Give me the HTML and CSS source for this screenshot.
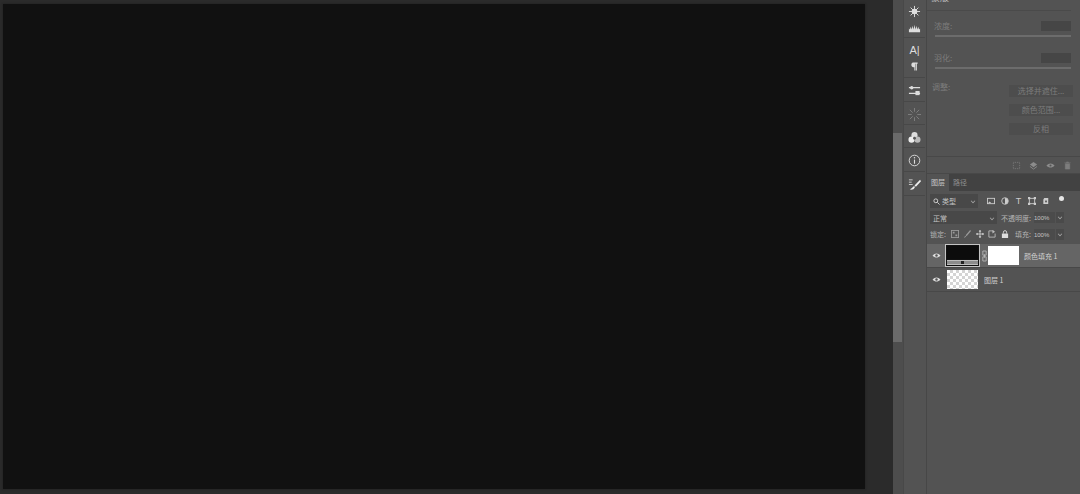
FILE: index.html
```html
<!DOCTYPE html>
<html lang="zh-CN">
<head>
    <meta charset="UTF-8">
    <title>图层面板</title>
    <link rel="stylesheet" href="styles.css">
</head>
<body>
<div class="app">
    <main class="workspace">
        <div class="canvas"></div>
    </main>

    <div class="scrollbar">
        <div class="scroll-thumb"></div>
    </div>

    <!-- collapsed panel icons -->
    <nav class="dock">
        <div class="dock-group group-a">
            <svg class="dock-icon" viewBox="0 0 14 14"><circle cx="7" cy="7" r="3" fill="#ddd"/><path d="M7 1v12M1 7h12M2.800 2.800l8.400 8.400M11.200 2.800l-8.400 8.400" stroke="#ddd" stroke-width="1"/></svg>
            <svg class="dock-icon" viewBox="0 0 14 14"><path d="M1 11V7l1 1 1-3 1 3 1-4 1 4 1-5 1 5 1-4 1 4 1-3 1 3 1-1v4z" fill="#ddd"/></svg>
        </div>
        <div class="dock-group group-b">
            <div class="dock-glyph">A|</div>
            <svg class="dock-icon icon-small" viewBox="0 0 14 14"><path d="M5 2h6v1.400h-1V12H8.600V3.400H8V12H6.800V8C4.500 8 3 6.800 3 5s.8-3 2-3z" fill="#ddd"/></svg>
        </div>
        <div class="dock-group group-c">
            <svg class="dock-icon" viewBox="0 0 14 14"><path d="M1 4h12M1 10h12" stroke="#ddd" stroke-width="1.400"/><circle cx="4" cy="4" r="1.800" fill="#ddd"/><rect x="8" y="7.500" width="4.500" height="4.500" fill="#ddd"/></svg>
        </div>
        <div class="dock-group group-d">
            <svg class="dock-icon" viewBox="0 0 14 14"><path d="M7 0v4M7 10v4M0 7h4M10 7h4M2 2l3 3M9 9l3 3M12 2L9 5M5 9l-3 3" stroke="#8c8c8c" stroke-width=".8"/></svg>
        </div>
        <div class="dock-group group-e">
            <svg class="dock-icon" viewBox="0 0 14 14"><circle cx="7" cy="4.500" r="3.300" fill="#ddd"/><circle cx="3.800" cy="9.300" r="3.300" fill="#eee"/><circle cx="10.200" cy="9.300" r="3.300" fill="#bbb"/><circle cx="7" cy="7.800" r="1.500" fill="#555"/></svg>
        </div>
        <div class="dock-group group-f">
            <svg class="dock-icon" viewBox="0 0 14 14"><circle cx="7" cy="7" r="5.700" fill="none" stroke="#ddd"/><path d="M7 6v4.500" stroke="#ddd" stroke-width="1.200"/><circle cx="7" cy="4" r=".8" fill="#ddd"/></svg>
        </div>
        <div class="dock-group group-g">
            <svg class="dock-icon" viewBox="0 0 14 14"><path d="M1 2h4M1 4.500h3M1 7h4" stroke="#ccc"/><path d="M13 2L7 8l1.500 1.500L14 3.500zM6.500 8.500L5 10c-.5.800-1.500 1-3 2.500 2.200.3 4.500 0 5.500-2.800z" fill="#eee"/></svg>
        </div>
    </nav>

    <aside class="panels">
        <section class="properties">
            <div class="prop-head"><span class="head-text">蒙版</span></div>
            <div class="prop-row">
                <span class="label">浓度:</span>
                <span class="num-box"></span>
            </div>
            <div class="slider"></div>
            <div class="prop-row row-feather">
                <span class="label">羽化:</span>
                <span class="num-box"></span>
            </div>
            <div class="slider"></div>
            <div class="adjust">
                <span class="label adjust-label">调整:</span>
                <div class="adjust-btns">
                    <div class="prop-btn">选择并遮住...</div>
                    <div class="prop-btn">颜色范围...</div>
                    <div class="prop-btn">反相</div>
                </div>
            </div>
        </section>

        <div class="prop-foot">
            <svg class="foot-icon" viewBox="0 0 10 10"><rect x="1.500" y="1.500" width="7" height="7" fill="none" stroke="#7d7d7d" stroke-dasharray="1 1"/></svg>
            <svg class="foot-icon" viewBox="0 0 10 10"><path d="M5 1l4 3-4 3-4-3z" fill="#8c8c8c"/><path d="M1 6l4 3 4-3" fill="none" stroke="#8c8c8c"/></svg>
            <svg class="foot-icon" viewBox="0 0 10 10"><path d="M.5 5C3 2 7 2 9.500 5 7 8 3 8 .5 5z" fill="#8c8c8c"/><circle cx="5" cy="5" r="1.200" fill="#555"/></svg>
            <svg class="foot-icon" viewBox="0 0 10 10"><path d="M1.500 2h7M4 2V1h2v1M2.500 3h5v6h-5z" fill="#7d7d7d" stroke="#7d7d7d" stroke-width=".6"/></svg>
        </div>

        <div class="tabs">
            <div class="tab active">图层</div>
            <div class="tab">路径</div>
        </div>

        <section class="layers">
            <div class="filter-row">
                <div class="select select-kind">
                    <svg class="search" viewBox="0 0 8 8"><circle cx="3.200" cy="3.200" r="2.200" fill="none" stroke="#ddd"/><path d="M5 5l2.500 2.500" stroke="#ddd"/></svg>
                    <span>类型</span><i class="caret"></i>
                </div>
                <div class="filter-icons">
                    <svg class="filter-icon" viewBox="0 0 9 9"><rect x=".5" y="1.500" width="8" height="6" fill="none" stroke="#ccc"/><path d="M1 7l2-2 2 2z" fill="#ccc"/></svg>
                    <svg class="filter-icon" viewBox="0 0 9 9"><circle cx="4.500" cy="4.500" r="3.700" fill="none" stroke="#ccc"/><path d="M4.500 1a3.500 3.500 0 010 7z" fill="#ccc"/></svg>
                    <span class="filter-t">T</span>
                    <svg class="filter-icon" viewBox="0 0 9 9"><rect x="1.500" y="1.500" width="6" height="6" fill="none" stroke="#ccc"/><path d="M0 0h2.500v2.500H0zM6.500 0H9v2.500H6.500zM0 6.500h2.500V9H0zM6.500 6.500H9V9H6.500z" fill="#ccc"/></svg>
                    <svg class="filter-icon" viewBox="0 0 9 9"><path d="M2.500 1h4.500v7H1.500V3z" fill="#ccc"/><rect x="3.500" y="4" width="2" height="2" fill="#555"/></svg>
                </div>
                <div class="filter-toggle"></div>
            </div>

            <div class="blend-row">
                <div class="select select-blend"><span>正常</span><i class="caret"></i></div>
                <span class="label-light opacity-label">不透明度:</span>
                <span class="value">100%</span>
                <span class="mini-drop"><i class="caret"></i></span>
            </div>

            <div class="lock-row">
                <span class="label-light">锁定:</span>
                <div class="lock-icons">
                    <svg class="lock-icon" viewBox="0 0 9 9"><rect x=".5" y=".5" width="8" height="8" fill="none" stroke="#999"/><path d="M2 2h2v2H2zM5 5h2v2H5z" fill="#999"/></svg>
                    <svg class="lock-icon" viewBox="0 0 9 9"><path d="M8 0L3 6l1 1 5-6zM2.500 6.500L1 9l2.500-1.500z" fill="#999"/></svg>
                    <svg class="lock-icon" viewBox="0 0 9 9"><path d="M4.500 0v9M0 4.500h9" stroke="#ccc"/><path d="M4.500 0L3 2h3zM4.500 9L3 7h3zM0 4.500L2 3v3zM9 4.500L7 3v3z" fill="#ccc"/></svg>
                    <svg class="lock-icon" viewBox="0 0 9 9"><path d="M1 1h5v1M1 1v7h7V4" fill="none" stroke="#bbb"/><path d="M5 0l3 2-3 2z" fill="#bbb"/></svg>
                    <svg class="lock-icon" viewBox="0 0 9 9"><rect x="1" y="4" width="7" height="5" fill="#ddd"/><path d="M2.700 4V2.500a1.800 1.800 0 013.600 0V4" fill="none" stroke="#ddd"/></svg>
                </div>
                <span class="label-light fill-label">填充:</span>
                <span class="value">100%</span>
                <span class="mini-drop"><i class="caret"></i></span>
            </div>

            <div class="layer selected">
                <svg class="eye" viewBox="0 0 10 8"><path d="M.5 4C3 .8 7 .8 9.500 4 7 7.200 3 7.200 .5 4z" fill="#ddd"/><circle cx="5" cy="4" r="1.400" fill="#555"/></svg>
                <div class="thumb-fill">
                    <div class="thumb-black"></div>
                    <div class="thumb-gradient"><i></i></div>
                </div>
                <svg class="chain" viewBox="0 0 6 14"><path d="M1 1h4v5H1zM1 8h4v5H1zM3 5v4" fill="none" stroke="#bbb"/></svg>
                <div class="thumb-mask"></div>
                <span class="layer-name">颜色填充 1</span>
            </div>

            <div class="layer">
                <svg class="eye" viewBox="0 0 10 8"><path d="M.5 4C3 .8 7 .8 9.500 4 7 7.200 3 7.200 .5 4z" fill="#ddd"/><circle cx="5" cy="4" r="1.400" fill="#555"/></svg>
                <div class="thumb-checker"></div>
                <span class="layer-name name-plain">图层 1</span>
            </div>
        </section>
    </aside>
</div>
</body>
</html>
```

FILE: styles.css
```css
* {
    margin: 0;
    padding: 0;
    box-sizing: border-box;
}

body {
    width: 1080px;
    height: 494px;
    overflow: hidden;
    background-color: #2a2a2a;
    font-family: 'Noto Sans CJK SC', 'Liberation Sans', sans-serif;
    font-size: 7px;
}

.app {
    display: flex;
    height: 494px;
}

/* canvas area */
.workspace {
    width: 893px;
    padding: 4px 28px 5px 3px;
    background-color: #2b2b2b;
}

.canvas {
    height: 485px;
    background-color: #111111;
    box-shadow: 0 0 2px #1c1c1c;
}

.scrollbar {
    width: 10px;
    padding-top: 133px;
    background-color: #4d4d4d;
}

.scroll-thumb {
    width: 9px;
    height: 209px;
    background-color: #6a6a6a;
}

/* icon dock */
.dock {
    width: 24px;
    padding-right: 1px;
    background-color: #535353;
    border-left: 1px solid #484848;
    border-right: 1px solid #474747;
}

.dock-group {
    display: flex;
    flex-direction: column;
    align-items: center;
    padding-top: 6px;
    border-bottom: 1px solid #484848;
}

.group-a { height: 38px; padding-top: 5px; gap: 4px; }
.group-b { height: 40px; gap: 5px; }
.group-c { height: 24px; }
.group-d { height: 23px; }
.group-e { height: 23px; }
.group-f { height: 24px; }
.group-g { height: 24px; }

.dock-icon {
    width: 13px;
    height: 13px;
}

.icon-small {
    width: 11px;
    height: 11px;
}

.dock-glyph {
    height: 12px;
    line-height: 12px;
    font-family: 'Liberation Sans', sans-serif;
    font-size: 11px;
    color: #dddddd;
}

/* right panels */
.panels {
    flex: 1;
    display: flex;
    flex-direction: column;
    background-color: #535353;
}

.properties {
    height: 157px;
    border-bottom: 1px solid #484848;
    padding-right: 9px;
}

.prop-head {
    height: 11px;
    border-bottom: 1px solid #4a4a4a;
    overflow: hidden;
}

.head-text {
    display: block;
    margin: -7px 0 0 4px;
    line-height: 10px;
    font-size: 9px;
    color: #bdbdbd;
}

.prop-row {
    display: flex;
    align-items: center;
    justify-content: space-between;
    height: 10px;
    margin: 10px 0 0 7px;
}

.row-feather {
    margin-top: 16px;
}

.label {
    margin-top: -2px;
    color: #7c7c7c;
    font-size: 8px;
}

.num-box {
    width: 30px;
    height: 10px;
    background-color: #464646;
}

.slider {
    height: 2px;
    margin: 4px 0 0 8px;
    background-color: #6c6c6c;
}

.adjust {
    display: flex;
    justify-content: space-between;
    margin-top: 16px;
    margin-right: -2px;
}

.adjust-label {
    margin-left: 5px;
    margin-top: -3px;
    line-height: 9px;
}

.adjust-btns {
    display: flex;
    flex-direction: column;
    gap: 7px;
}

.prop-btn {
    width: 64px;
    height: 12px;
    line-height: 11px;
    text-align: center;
    font-size: 8px;
    color: #7c7c7c;
    background-color: #4d4d4d;
}

.prop-foot {
    display: flex;
    justify-content: flex-end;
    align-items: center;
    gap: 8px;
    height: 16px;
    padding-right: 8px;
}

.foot-icon {
    width: 9px;
    height: 9px;
}

.tabs {
    display: flex;
    height: 18px;
    background-color: #424242;
    border-top: 1px solid #484848;
}

.tab {
    width: 22px;
    line-height: 17px;
    text-align: center;
    font-size: 7px;
    color: #8f8f8f;
}

.tab.active {
    background-color: #535353;
    color: #c8c8c8;
}

/* layers panel */
.layers {
    padding-top: 2px;
}

.filter-row {
    display: flex;
    align-items: center;
    height: 16px;
    padding-left: 3px;
}

.select {
    display: flex;
    align-items: center;
    height: 14px;
    padding: 0 3px;
    background-color: #484848;
    color: #c4c4c4;
    font-size: 7px;
}

.select-kind {
    width: 48px;
    gap: 2px;
}

.select-blend {
    width: 67px;
    height: 13px;
}

.search {
    width: 7px;
    height: 7px;
}

.caret {
    width: 4px;
    height: 4px;
    margin-left: auto;
    border-right: 1px solid #a8a8a8;
    border-bottom: 1px solid #a8a8a8;
    transform: rotate(45deg) scale(.8);
}

.filter-icons {
    display: flex;
    align-items: center;
    gap: 5.7px;
    margin-left: 9px;
}

.filter-icon {
    width: 8px;
    height: 8px;
}

.filter-t {
    width: 8px;
    text-align: center;
    font-family: 'Liberation Sans', sans-serif;
    font-size: 9px;
    line-height: 9px;
    color: #cccccc;
}

.filter-toggle {
    width: 5px;
    height: 5px;
    margin: -6px 0 0 9px;
    border-radius: 50%;
    background-color: #e6e6e6;
}

.blend-row {
    display: flex;
    align-items: center;
    height: 13px;
    margin-top: 2px;
    padding-left: 3px;
}

.label-light {
    color: #b4b4b4;
    font-size: 7px;
    white-space: nowrap;
}

.opacity-label {
    margin-left: 4px;
}

.value {
    width: 21px;
    height: 11px;
    margin-left: 3px;
    color: #c4c4c4;
    font-family: 'Liberation Sans', sans-serif;
    font-size: 6px;
    line-height: 12px;
    background-color: #4b4b4b;
}

.mini-drop {
    display: flex;
    justify-content: center;
    width: 8px;
    height: 11px;
    margin-left: 1px;
    padding-top: 3px;
    background-color: #4a4a4a;
}

.mini-drop .caret {
    margin-left: 0;
}

.lock-row {
    display: flex;
    align-items: center;
    height: 12px;
    margin-top: 4px;
    padding-left: 3px;
}

.lock-icons {
    display: flex;
    gap: 4.5px;
    margin-left: 5px;
}

.lock-icon {
    width: 8px;
    height: 8px;
}

.fill-label {
    margin-left: 6px;
}

.layer {
    display: flex;
    align-items: center;
    height: 24px;
    border-bottom: 1px solid #484848;
}

.layer.selected {
    margin-top: 4px;
    background-color: #656565;
}

.eye {
    flex: none;
    width: 9px;
    height: 7px;
    margin-left: 5px;
}

.thumb-fill {
    width: 35px;
    height: 23px;
    margin-left: 4px;
    padding: 1px;
    border: 1px solid #c4c4c4;
    background-color: #111111;
}

.thumb-black {
    height: 13px;
    background-color: #0c0c0c;
}

.thumb-gradient {
    display: flex;
    justify-content: center;
    height: 5px;
    margin-top: 1px;
    border-top: 1px solid #bdbdbd;
    border-bottom: 1px solid #bdbdbd;
    background-color: #8c8c8c;
}

.thumb-gradient i {
    width: 3px;
    height: 3px;
    background-color: #222222;
}

.chain {
    flex: none;
    width: 5px;
    height: 12px;
    margin-left: 2px;
}

.thumb-mask {
    width: 31px;
    height: 19px;
    margin-left: 1px;
    background-color: #ffffff;
}

.layer-name {
    margin-left: 5px;
    color: #d0d0d0;
    font-size: 7px;
    white-space: nowrap;
}

.name-plain {
    margin-left: 6px;
}

.thumb-checker {
    width: 31px;
    height: 19px;
    margin-left: 6px;
    background-color: #ffffff;
    background-image: conic-gradient(#d4d4d4 25%, #ffffff 0 50%, #d4d4d4 0 75%, #ffffff 0);
    background-size: 6px 6px;
}
```
